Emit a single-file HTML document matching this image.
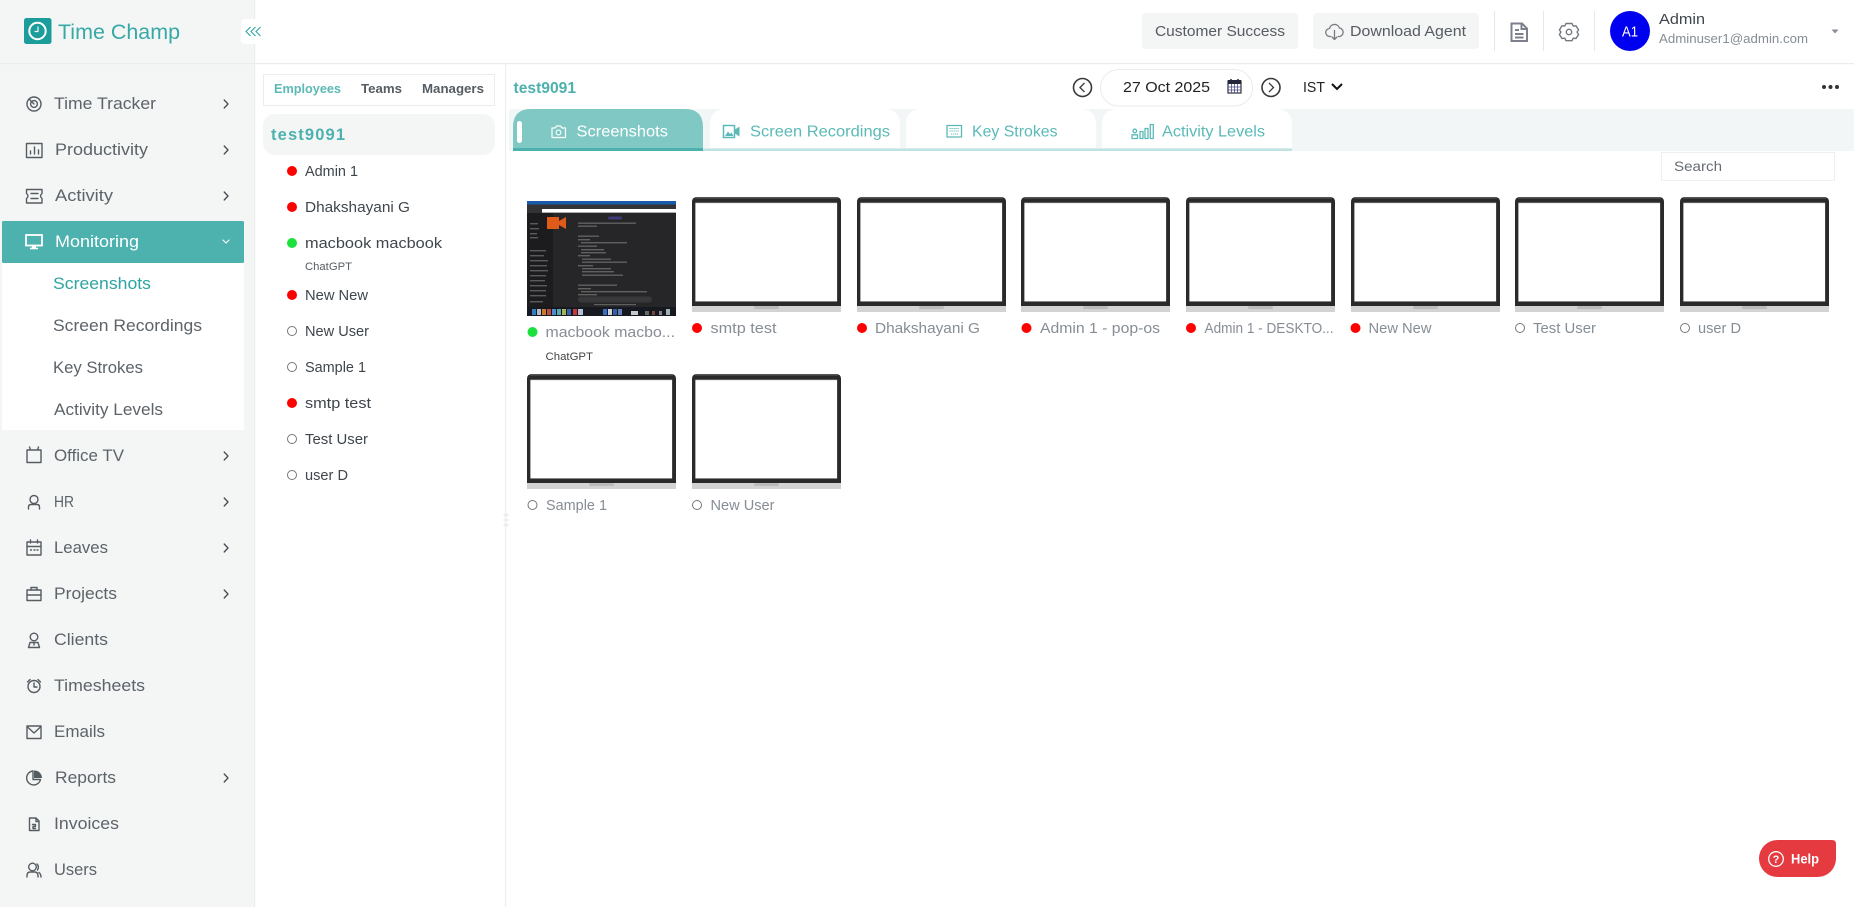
<!DOCTYPE html>
<html lang="en">
<head>
<meta charset="utf-8">
<title>Time Champ</title>
<style>
html,body{margin:0;padding:0;background:#fff;width:1854px;height:907px;overflow:hidden}
svg{display:block}
text{font-family:"Liberation Sans",sans-serif;white-space:pre}
.n{font-size:16.5px;fill:#5c6369}
.u{font-size:14.5px;fill:#3f464c}
.l{font-size:14.5px;fill:#868d95}
.t{font-size:15.5px;fill:#5bbab7}
.i{fill:none;stroke:#555c62;stroke-width:1.4;stroke-linecap:round;stroke-linejoin:round}
.tc{fill:none;stroke:#5bbab7;stroke-width:1.3;stroke-linecap:round;stroke-linejoin:round}
</style>
</head>
<body>
<svg width="1854" height="907" viewBox="0 0 1854 907" xmlns="http://www.w3.org/2000/svg">
<defs>
<symbol id="lap" width="149" height="115" viewBox="0 0 149 115">
<path d="M0 109V5Q0 0 5 0H144Q149 0 149 5V109Z" fill="#2a2a2a"/>
<path d="M3 .8H146" stroke="#5a5a5a" stroke-width="1.4"/>
<rect x="3.3" y="5.6" width="141.900" height="99" fill="#a8a8a8"/>
<rect x="3.500" y="6.200" width="141.500" height="98" fill="#fff"/>
<rect x="0" y="109" width="149" height="6" fill="#d3d3d3"/>
<rect x="62" y="109" width="25" height="3" rx="1.5" fill="#bbb"/>
</symbol>
<symbol id="chev" width="10" height="12" viewBox="0 0 10 12"><path d="M3.2 2L7 6L3.2 10" fill="none" stroke="#444a50" stroke-width="1.3" stroke-linecap="round" stroke-linejoin="round"/></symbol>
</defs>

<!-- sidebar -->
<rect x="0" y="0" width="254" height="907" fill="#f4f6f6"/>
<rect x="254" y="0" width="1.2" height="907" fill="#e9edef"/>
<rect x="0" y="63" width="1854" height="1.2" fill="#e9ebec"/>

<!-- logo -->
<rect x="24" y="18" width="27.5" height="26" rx="2.5" fill="#1b9d9b"/>
<circle cx="37.5" cy="31" r="8.2" fill="none" stroke="#fff" stroke-width="2"/>
<path d="M38 26.5V31.5H34.5" fill="none" stroke="#f4f4f4" stroke-width="1.2"/>
<text x="58" y="39" font-size="21.5" fill="#36a9a6" textLength="122" lengthAdjust="spacingAndGlyphs">Time Champ</text>
<rect x="241" y="19" width="25" height="25" rx="4" fill="#fff"/>
<path d="M250.500 27L246 31.500L250.500 36M255.500 27L251 31.500L255.500 36M260.500 27L256 31.500L260.500 36" fill="none" stroke="#2fa5a2" stroke-width="1.100"/>

<!-- active block -->
<rect x="2" y="221" width="242" height="42" rx="1.5" fill="#4db1ae"/>
<rect x="2" y="263" width="242" height="167" fill="#fff"/>

<!-- menu text -->
<text class="n" x="54" y="109" textLength="102" lengthAdjust="spacingAndGlyphs">Time Tracker</text>
<text class="n" x="55" y="155" textLength="93" lengthAdjust="spacingAndGlyphs">Productivity</text>
<text class="n" x="55" y="201" textLength="58" lengthAdjust="spacingAndGlyphs">Activity</text>
<text class="n" x="55" y="247" textLength="84" lengthAdjust="spacingAndGlyphs" style="fill:#fff">Monitoring</text>
<text class="n" x="53" y="289" textLength="98" lengthAdjust="spacingAndGlyphs" style="fill:#2fa5a2">Screenshots</text>
<text class="n" x="53" y="331" textLength="149" lengthAdjust="spacingAndGlyphs">Screen Recordings</text>
<text class="n" x="53" y="373" textLength="90" lengthAdjust="spacingAndGlyphs">Key Strokes</text>
<text class="n" x="54" y="415" textLength="109" lengthAdjust="spacingAndGlyphs">Activity Levels</text>
<text class="n" x="54" y="461" textLength="70" lengthAdjust="spacingAndGlyphs">Office TV</text>
<text class="n" x="54" y="507" textLength="20" lengthAdjust="spacingAndGlyphs" style="font-size:15.5px">HR</text>
<text class="n" x="54" y="553" textLength="54" lengthAdjust="spacingAndGlyphs">Leaves</text>
<text class="n" x="54" y="599" textLength="63" lengthAdjust="spacingAndGlyphs">Projects</text>
<text class="n" x="54" y="645" textLength="54" lengthAdjust="spacingAndGlyphs">Clients</text>
<text class="n" x="54" y="691" textLength="91" lengthAdjust="spacingAndGlyphs">Timesheets</text>
<text class="n" x="54" y="737" textLength="51" lengthAdjust="spacingAndGlyphs">Emails</text>
<text class="n" x="55" y="783" textLength="61" lengthAdjust="spacingAndGlyphs">Reports</text>
<text class="n" x="54" y="829" textLength="65" lengthAdjust="spacingAndGlyphs">Invoices</text>
<text class="n" x="54" y="875" textLength="43" lengthAdjust="spacingAndGlyphs">Users</text>

<!-- chevrons -->
<use href="#chev" x="221" y="98"/><use href="#chev" x="221" y="144"/><use href="#chev" x="221" y="190"/>
<use href="#chev" x="221" y="450"/><use href="#chev" x="221" y="496"/><use href="#chev" x="221" y="542"/>
<use href="#chev" x="221" y="588"/><use href="#chev" x="221" y="772"/>
<path d="M223 240L226 243L229 240" fill="none" stroke="#fff" stroke-width="1.100" stroke-linecap="round"/>

<!-- menu icons -->
<g class="i">
<circle cx="34" cy="104" r="7"/><circle cx="34" cy="104" r="3.400"/><path d="M29 99L34 104"/>
<rect x="26.500" y="143.500" width="15.500" height="14"/><path d="M30.500 154V151M34.500 154V147M38.500 154V150"/>
<path d="M26.500 189.500H42V193.500Q39 196 42 198.500V203H26.500V198.500Q29.500 196 26.500 193.500ZM31 193.500H38M31 198.500H38"/>
<path d="M27 450V462.500H41V450ZM30.500 450L29.500 447M37.500 450L38.500 447"/>
<circle cx="34" cy="499.500" r="4"/><path d="M28.500 509V507Q28.500 504.500 31 504.500H37Q39.500 504.500 39.500 507V509"/>
<rect x="27" y="542" width="14" height="13"/><path d="M27 546.500H41M30.500 540V543M37.500 540V543M30.500 550H31.500M34 550H35M37 550H38"/>
<rect x="27" y="590" width="14" height="10.500"/><path d="M31 590V587.500H37V590M27 595H41"/>
<circle cx="34" cy="637" r="3.800"/><path d="M28.500 647.500L30 642.500H38L39.500 647.500ZM34 642.500V645"/>
<circle cx="34" cy="686.500" r="6"/><path d="M34 683V687H37M27.500 682L30 679.500M40.500 682L38 679.500"/>
<rect x="27" y="726" width="14" height="12.500"/><path d="M27.500 727L34 733L40.500 727"/>
<path d="M33 771A7 7 0 1 0 40.500 779.500H33Z"/>
<path d="M29.500 818H36L39 821V830.500H29.500ZM36 818V821.500H39M32.500 824.500H35.500V826.500H33V828.500H35.500"/>
<circle cx="32.500" cy="867" r="3.800"/><path d="M27 877V875.500Q27 872 30.500 872H34.500Q38 872 38 875.500V877M37 864Q39.500 866.500 37.500 870M39 872.500Q41 874 41 877"/>
</g>
<path d="M34 770.500A7.500 7.500 0 0 1 42 778H34Z" fill="#555c62"/>
<rect x="26" y="235" width="16" height="10.500" fill="none" stroke="#fff" stroke-width="1.800"/>
<rect x="32" y="245" width="4" height="3" fill="#fff"/>
<path d="M30 248.500H38" stroke="#fff" stroke-width="1.600"/>

<!-- employee panel -->
<rect x="505" y="64" width="1.2" height="843" fill="#eceeef"/>
<rect x="263.500" y="74.500" width="231" height="31" fill="#fff" stroke="#ebeded"/>
<text x="274" y="93" font-size="13" font-weight="bold" fill="#5bb9b6" textLength="67" lengthAdjust="spacingAndGlyphs">Employees</text>
<text x="361" y="93" font-size="13" font-weight="bold" fill="#555c62" textLength="41" lengthAdjust="spacingAndGlyphs">Teams</text>
<text x="422" y="93" font-size="13" font-weight="bold" fill="#555c62" textLength="62" lengthAdjust="spacingAndGlyphs">Managers</text>
<rect x="263" y="114" width="232" height="41" rx="12" fill="#f4f6f6"/>
<text x="271" y="140" font-size="16.500" font-weight="bold" fill="#4db1ae" textLength="74" lengthAdjust="spacing">test9091</text>

<circle cx="292" cy="171" r="5" fill="#f00"/>
<text class="u" x="305" y="176" textLength="53" lengthAdjust="spacingAndGlyphs">Admin 1</text>
<circle cx="292" cy="207" r="5" fill="#f00"/>
<text class="u" x="305" y="212" textLength="105" lengthAdjust="spacingAndGlyphs">Dhakshayani G</text>
<circle cx="292" cy="243" r="5" fill="#1be13c"/>
<text class="u" x="305" y="248" textLength="137" lengthAdjust="spacingAndGlyphs">macbook macbook</text>
<text x="305" y="270" font-size="11" fill="#555c62" textLength="47" lengthAdjust="spacingAndGlyphs">ChatGPT</text>
<circle cx="292" cy="295" r="5" fill="#f00"/>
<text class="u" x="305" y="300" textLength="63" lengthAdjust="spacingAndGlyphs">New New</text>
<circle cx="292" cy="331" r="4.500" fill="#fff" stroke="#777" stroke-width="1"/>
<text class="u" x="305" y="336" textLength="64" lengthAdjust="spacingAndGlyphs">New User</text>
<circle cx="292" cy="367" r="4.500" fill="#fff" stroke="#777" stroke-width="1"/>
<text class="u" x="305" y="372" textLength="61" lengthAdjust="spacingAndGlyphs">Sample 1</text>
<circle cx="292" cy="403" r="5" fill="#f00"/>
<text class="u" x="305" y="408" textLength="66" lengthAdjust="spacingAndGlyphs">smtp test</text>
<circle cx="292" cy="439" r="4.500" fill="#fff" stroke="#777" stroke-width="1"/>
<text class="u" x="305" y="444" textLength="63" lengthAdjust="spacingAndGlyphs">Test User</text>
<circle cx="292" cy="475" r="4.500" fill="#fff" stroke="#777" stroke-width="1"/>
<text class="u" x="305" y="480" textLength="43" lengthAdjust="spacingAndGlyphs">user D</text>

<g fill="#eceff0"><circle cx="505" cy="515" r="1.500"/><circle cx="507" cy="515" r="1.500"/><circle cx="505" cy="520" r="1.500"/><circle cx="507" cy="520" r="1.500"/><circle cx="505" cy="525" r="1.500"/><circle cx="507" cy="525" r="1.500"/></g>

<!-- top header right -->
<rect x="1142" y="13" width="156" height="36" rx="4" fill="#f4f5f5"/>
<text x="1155" y="36" font-size="14.500" fill="#555c62" textLength="130" lengthAdjust="spacingAndGlyphs">Customer Success</text>
<rect x="1313" y="13" width="166" height="36" rx="4" fill="#f4f5f5"/>
<path d="M1330.500 36.500H1330A4 4 0 0 1 1329.500 28.500A5.200 5.200 0 0 1 1339.500 28A4.300 4.300 0 0 1 1339.500 36.500H1338.500M1334.500 30.500V39.500M1332 37L1334.500 39.500L1337 37" fill="none" stroke="#777c82" stroke-width="1.300" stroke-linecap="round" stroke-linejoin="round"/>
<text x="1350" y="36" font-size="14.500" fill="#555c62" textLength="116" lengthAdjust="spacingAndGlyphs">Download Agent</text>
<rect x="1494" y="11" width="1" height="40" fill="#e6e7e8"/>
<rect x="1543" y="11" width="1" height="40" fill="#e6e7e8"/>
<rect x="1594" y="11" width="1" height="40" fill="#e6e7e8"/>
<path d="M1511.500 23.500H1522L1527 28.500V41H1511.500ZM1521.500 23.500V29H1527M1515 30H1519M1515 34H1523.500M1515 37.500H1523.500" fill="none" stroke="#7c808c" stroke-width="2"/>
<path d="M1566 23.500H1572L1573.200 26L1576 25.800L1578.600 30L1577 32L1578.600 34.500L1576 38.500L1573.200 38.200L1572 40.700H1566L1564.800 38.200L1562 38.500L1559.400 34.500L1561 32L1559.400 30L1562 25.800L1564.800 26Z" fill="none" stroke="#74797f" stroke-width="1.400" stroke-linejoin="round"/>
<circle cx="1569" cy="32" r="2.700" fill="none" stroke="#74797f" stroke-width="1.400"/>
<circle cx="1630" cy="31" r="20" fill="#0000f0"/>
<text x="1622" y="36.500" font-size="14.500" fill="#fff" textLength="16" lengthAdjust="spacingAndGlyphs">A1</text>
<text x="1659" y="24" font-size="14.500" fill="#3f464c" textLength="46" lengthAdjust="spacingAndGlyphs">Admin</text>
<text x="1659" y="43" font-size="13" fill="#868d95" textLength="149" lengthAdjust="spacingAndGlyphs">Adminuser1@admin.com</text>
<path d="M1831.500 29.500H1838.500L1835 33.500Z" fill="#868d95"/>

<!-- main heading row -->
<text x="513.500" y="93" font-size="15.500" font-weight="bold" fill="#4db1ae" textLength="62.500" lengthAdjust="spacingAndGlyphs">test9091</text>
<circle cx="1082.500" cy="87.500" r="9" fill="#fff" stroke="#3a3a3a" stroke-width="1.600"/>
<path d="M1084.500 83L1080 87.500L1084.500 92" fill="none" stroke="#3a3a3a" stroke-width="1.300"/>
<rect x="1100.500" y="69.500" width="152" height="36.500" rx="18" fill="#fff" stroke="#e9ebec"/>
<text x="1123" y="92" font-size="15" fill="#222" textLength="87" lengthAdjust="spacingAndGlyphs">27 Oct 2025</text>
<rect x="1228" y="81" width="13" height="12" fill="#fff" stroke="#2e2e3e" stroke-width="1.200"/>
<rect x="1228" y="80" width="13" height="4" fill="#24243a"/>
<path d="M1231 79V82M1238 79V82" stroke="#24243a" stroke-width="1.500"/>
<path d="M1228 87H1241M1228 90H1241M1231.500 84V93M1234.500 84V93M1237.500 84V93" stroke="#4a4a8a" stroke-width=".8"/>
<circle cx="1271" cy="87.500" r="9" fill="#fff" stroke="#3a3a3a" stroke-width="1.600"/>
<path d="M1269 83L1273.500 87.500L1269 92" fill="none" stroke="#3a3a3a" stroke-width="1.300"/>
<text x="1303" y="92" font-size="14.500" fill="#222" textLength="22" lengthAdjust="spacingAndGlyphs">IST</text>
<path d="M1332 84L1337 89L1342 84" fill="none" stroke="#111" stroke-width="2"/>
<g fill="#333"><circle cx="1824" cy="87" r="2"/><circle cx="1830.500" cy="87" r="2"/><circle cx="1837" cy="87" r="2"/></g>

<!-- tab strip -->
<rect x="509" y="109" width="1345" height="42" fill="#f2f6f7"/>
<path d="M710 148V125Q710 109 726 109H884Q900 109 900 125V148Z" fill="#fff"/>
<path d="M906 148V125Q906 109 922 109H1080Q1096 109 1096 125V148Z" fill="#fff"/>
<path d="M1102 148V125Q1102 109 1118 109H1276Q1292 109 1292 125V148Z" fill="#fff"/>
<rect x="703" y="148.500" width="589" height="2.500" fill="#bfe3e2"/>
<path d="M513 148V127Q513 109 531 109H685Q703 109 703 127V148Z" fill="#80c8c4"/>
<rect x="513" y="148" width="190" height="3" fill="#4db1ae"/>
<rect x="517" y="121" width="5" height="22" rx="2.500" fill="#fff"/>
<path d="M552 128H555L556.500 126H560.500L562 128H565.500V137.500H552Z" fill="none" stroke="#fff" stroke-width="1.200" stroke-linejoin="round"/>
<circle cx="558.500" cy="132.500" r="2.400" fill="none" stroke="#fff" stroke-width="1.100"/>
<text x="576.500" y="136.500" font-size="15.500" fill="#fff" textLength="91.500" lengthAdjust="spacingAndGlyphs">Screenshots</text>
<rect x="723.500" y="125.500" width="11" height="12" fill="none" stroke="#5bbab7" stroke-width="1.500"/>
<path d="M725 136L728 131.500L730 134L731.500 132.500L733.500 136ZM735 129.500L739.500 126.500V136.500L735 133.500Z" fill="#5bbab7"/>
<text x="750" y="136.500" class="t" textLength="140" lengthAdjust="spacingAndGlyphs">Screen Recordings</text>
<rect x="947" y="125.500" width="14.500" height="11.500" class="tc"/>
<path d="M949.500 128.500H959M949.500 131H959M951 134H958" stroke="#5bbab7" stroke-width="1.100" stroke-dasharray="1.200 .8" fill="none"/>
<text x="972" y="136.500" class="t" textLength="85.500" lengthAdjust="spacingAndGlyphs">Key Strokes</text>
<circle cx="1134.800" cy="131" r="1.800" class="tc"/><path d="M1132 138.500V134.800H1137.500V138.500Z" class="tc"/>
<rect x="1140" y="131.500" width="3" height="7" class="tc"/>
<rect x="1145" y="128.500" width="3" height="10" class="tc"/>
<rect x="1150.300" y="124.500" width="3" height="14" class="tc"/>
<text x="1162" y="136.500" class="t" textLength="103" lengthAdjust="spacingAndGlyphs">Activity Levels</text>

<!-- search -->
<rect x="1661.500" y="152.500" width="173" height="28" fill="#fff" stroke="#efefef"/>
<text x="1674" y="171" font-size="14" fill="#666c72" textLength="48" lengthAdjust="spacingAndGlyphs">Search</text>

<!-- thumbnail -->
<g>
<rect x="527" y="201" width="149" height="115" fill="#262628"/>
<rect x="527" y="201" width="149" height="3.500" fill="#1a5aa8"/>
<rect x="527" y="204.500" width="149" height="8.500" fill="#333335"/>
<rect x="542" y="209" width="134" height="3.600" fill="#fff"/>
<rect x="527" y="213" width="26" height="94" fill="#1c1c1e"/>
<path d="M547 217H559V221L566 217V229L559 225V229H547Z" fill="#e05a1a"/>
<rect x="608" y="216.500" width="14" height="3" rx="1.500" fill="#3c3a7a"/>
<g fill="#9a9a9a" opacity=".5">
<rect x="530" y="223" width="8" height="1.400"/><rect x="530" y="228" width="9" height="1.400"/><rect x="530" y="233" width="7" height="1.400"/><rect x="530" y="237" width="8" height="1.400"/>
<rect x="530" y="250" width="16" height="1.400"/><rect x="530" y="255" width="14" height="1.400"/><rect x="530" y="260" width="18" height="1.400"/><rect x="530" y="265" width="17" height="1.400"/><rect x="530" y="270" width="18" height="1.400"/><rect x="530" y="275" width="16" height="1.400"/><rect x="530" y="280" width="15" height="1.400"/><rect x="530" y="285" width="17" height="1.400"/><rect x="530" y="290" width="16" height="1.400"/><rect x="530" y="295" width="16" height="1.400"/>
<rect x="530" y="301" width="13" height="1.400"/>
<rect x="578" y="222.500" width="58" height="1.400"/><rect x="578" y="225.500" width="19" height="1.400"/>
<rect x="578" y="235.500" width="21" height="1.400"/><rect x="578" y="239" width="12" height="1.400"/><rect x="581" y="242" width="46" height="1.400"/><rect x="578" y="245.500" width="19" height="1.400"/><rect x="581" y="249" width="23" height="1.400"/><rect x="581" y="252" width="25" height="1.400"/><rect x="578" y="255" width="12" height="1.400"/><rect x="582" y="258.500" width="29" height="1.400"/><rect x="582" y="261.500" width="45" height="1.400"/><rect x="578" y="265" width="15" height="1.400"/><rect x="582" y="268" width="29" height="1.400"/><rect x="582" y="271" width="32" height="1.400"/><rect x="582" y="274.500" width="41" height="1.400"/>
<rect x="578" y="284.500" width="39" height="1.400"/><rect x="578" y="288" width="13" height="1.400"/><rect x="581" y="291" width="66" height="1.400"/><rect x="578" y="294" width="19" height="1.400"/>
<rect x="594" y="304" width="42" height="1.200"/>
</g>
<rect x="578" y="296.500" width="74" height="6" rx="3" fill="#38383a"/>
<rect x="527" y="307" width="149" height="9" fill="#161a20"/>
<g opacity=".85">
<rect x="532" y="309" width="4" height="6" fill="#3a8ee0"/><rect x="537" y="309" width="4" height="6" fill="#d0d8e0"/><rect x="542" y="309" width="4" height="6" fill="#e09030"/><rect x="547" y="309" width="4" height="6" fill="#e05050"/><rect x="552" y="309" width="4" height="6" fill="#5aa0e0"/><rect x="557" y="309" width="4" height="6" fill="#60c0d0"/><rect x="562" y="309" width="4" height="6" fill="#c0d060"/><rect x="567" y="309" width="4" height="6" fill="#3a70c0"/><rect x="573" y="309" width="4" height="6" fill="#e04040"/><rect x="578" y="309" width="5" height="6" fill="#d8d8f0"/><rect x="603" y="309" width="4" height="6" fill="#3a80e0"/><rect x="608" y="309" width="4" height="6" fill="#f0f0f0"/><rect x="613" y="309" width="4" height="6" fill="#3a6ac0"/><rect x="618" y="309" width="4" height="6" fill="#7090d0"/><rect x="631" y="311" width="7" height="4" fill="#e8e8e8"/><rect x="645" y="311" width="4" height="4" fill="#777"/><rect x="652" y="311" width="3" height="4" fill="#8a5040"/><rect x="659" y="311" width="3" height="4" fill="#999"/><rect x="666" y="309" width="4" height="6" fill="#bcc"/>
</g>
</g>
<circle cx="532.500" cy="332" r="5" fill="#1be13c"/>
<text class="l" x="545.500" y="337" textLength="129.500" lengthAdjust="spacingAndGlyphs">macbook macbo...</text>
<text x="545.500" y="360" font-size="11" fill="#444" textLength="47.500" lengthAdjust="spacingAndGlyphs">ChatGPT</text>

<!-- laptops row 1 -->
<use href="#lap" x="692" y="197"/><use href="#lap" x="857" y="197"/><use href="#lap" x="1021" y="197"/><use href="#lap" x="1186" y="197"/>
<use href="#lap" x="1351" y="197"/><use href="#lap" x="1515" y="197"/><use href="#lap" x="1680" y="197"/>
<circle cx="697" cy="328" r="5" fill="#f00"/>
<text class="l" x="710.500" y="333" textLength="66" lengthAdjust="spacingAndGlyphs">smtp test</text>
<circle cx="862" cy="328" r="5" fill="#f00"/>
<text class="l" x="875" y="333" textLength="105" lengthAdjust="spacingAndGlyphs">Dhakshayani G</text>
<circle cx="1026.500" cy="328" r="5" fill="#f00"/>
<text class="l" x="1040" y="333" textLength="120" lengthAdjust="spacingAndGlyphs">Admin 1 - pop-os</text>
<circle cx="1191" cy="328" r="5" fill="#f00"/>
<text class="l" x="1204.500" y="333" textLength="129" lengthAdjust="spacingAndGlyphs">Admin 1 - DESKTO...</text>
<circle cx="1355.500" cy="328" r="5" fill="#f00"/>
<text class="l" x="1368.500" y="333" textLength="63" lengthAdjust="spacingAndGlyphs">New New</text>
<circle cx="1520" cy="328" r="4.500" fill="#fff" stroke="#777" stroke-width="1"/>
<text class="l" x="1533" y="333" textLength="63" lengthAdjust="spacingAndGlyphs">Test User</text>
<circle cx="1685" cy="328" r="4.500" fill="#fff" stroke="#777" stroke-width="1"/>
<text class="l" x="1698" y="333" textLength="43" lengthAdjust="spacingAndGlyphs">user D</text>

<!-- laptops row 2 -->
<use href="#lap" x="527" y="374"/><use href="#lap" x="692" y="374"/>
<circle cx="532.500" cy="505" r="4.500" fill="#fff" stroke="#777" stroke-width="1"/>
<text class="l" x="546" y="510" textLength="61" lengthAdjust="spacingAndGlyphs">Sample 1</text>
<circle cx="697" cy="505" r="4.500" fill="#fff" stroke="#777" stroke-width="1"/>
<text class="l" x="710.500" y="510" textLength="64" lengthAdjust="spacingAndGlyphs">New User</text>

<!-- help -->
<path d="M1777.500 840H1832Q1836 840 1836 844V858.500A18.500 18.500 0 0 1 1817.500 877H1777.500A18.500 18.500 0 0 1 1777.500 840Z" fill="#e53a40"/>
<circle cx="1776" cy="859" r="7.300" fill="none" stroke="#fff" stroke-width="1.300"/>
<text x="1776" y="863" font-size="11" font-weight="bold" fill="#fff" text-anchor="middle">?</text>
<text x="1791" y="863.500" font-size="14" font-weight="bold" fill="#fff" textLength="28" lengthAdjust="spacingAndGlyphs">Help</text>
</svg>
</body>
</html>
